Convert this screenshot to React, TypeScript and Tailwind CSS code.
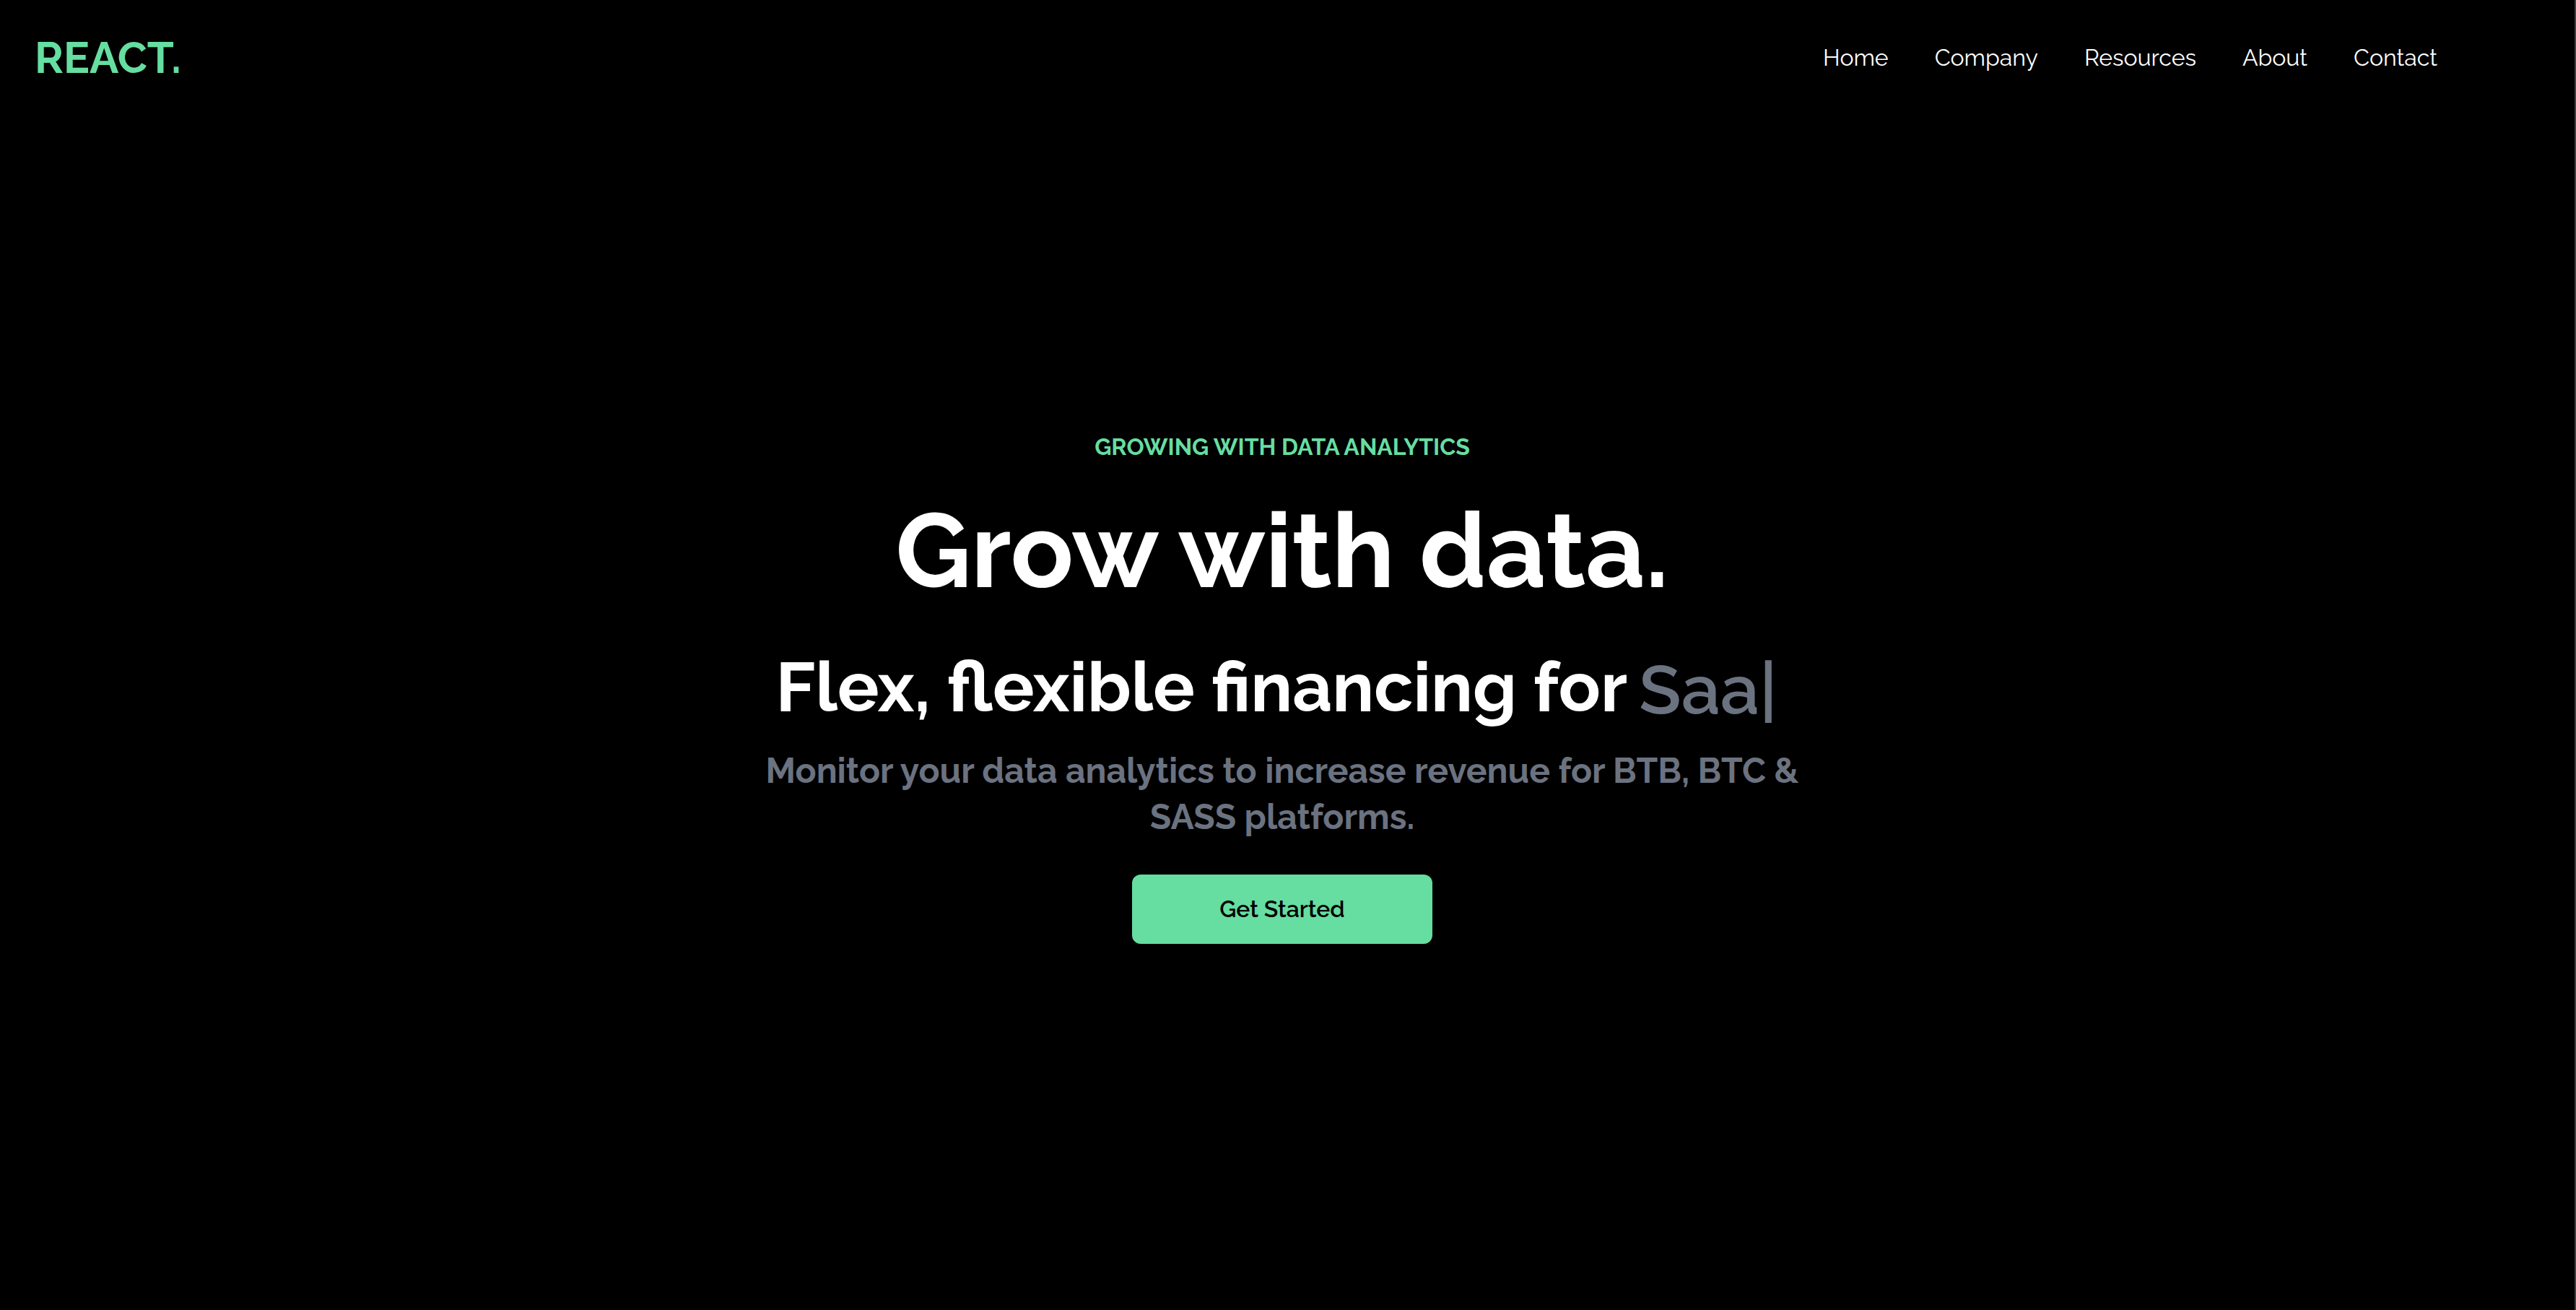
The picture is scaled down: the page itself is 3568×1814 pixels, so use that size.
const links = ["Home", "Company", "Resources", "About", "Contact"];

function Navbar() {
  return (
    <header className="flex h-40 items-center justify-between pr-[190px] pl-12">
      <h1 className="text-[60px] leading-[72px] font-bold text-[#66dda1]">REACT.</h1>
      <nav aria-label="Main">
        <ul className="flex gap-16">
          {links.map((label) => (
            <li key={label}>
              <a href={`#${label.toLowerCase()}`} className="text-[32px] leading-[48px]">
                {label}
              </a>
            </li>
          ))}
        </ul>
      </nav>
    </header>
  );
}

function Hero() {
  return (
    <main className="flex flex-1 flex-col items-center justify-center pr-[14px] pb-[72px] text-center">
      <p className="text-[32px] leading-[48px] font-bold text-[#66dda1]">GROWING WITH DATA ANALYTICS</p>
      <h2 className="mt-12 text-[144px] leading-[144px] font-bold">Grow with data.</h2>
      <div className="mt-[68px] flex items-start justify-center gap-4 pr-4">
        <p className="text-[96px] leading-[96px] font-bold">Flex, flexible financing for</p>
        <p className="mt-1 text-[96px] leading-[96px] font-semibold text-[#6b7280]">Saa|</p>
      </div>
      <p className="mt-8 max-w-[1500px] text-[48px] leading-[64px] font-bold text-[#6b7280]">
        Monitor your data analytics to increase revenue for BTB, BTC &amp; SASS platforms.
      </p>
      <button
        type="button"
        className="mt-12 h-24 w-[416px] rounded-xl bg-[#66dda1] text-[32px] leading-[48px] font-semibold text-black"
      >
        Get Started
      </button>
    </main>
  );
}

export default function App() {
  return (
    <div className="flex min-h-screen flex-col border-r-2 border-[#3f3f3f] bg-black font-['Raleway',sans-serif] text-white">
      <Navbar />
      <Hero />
    </div>
  );
}
